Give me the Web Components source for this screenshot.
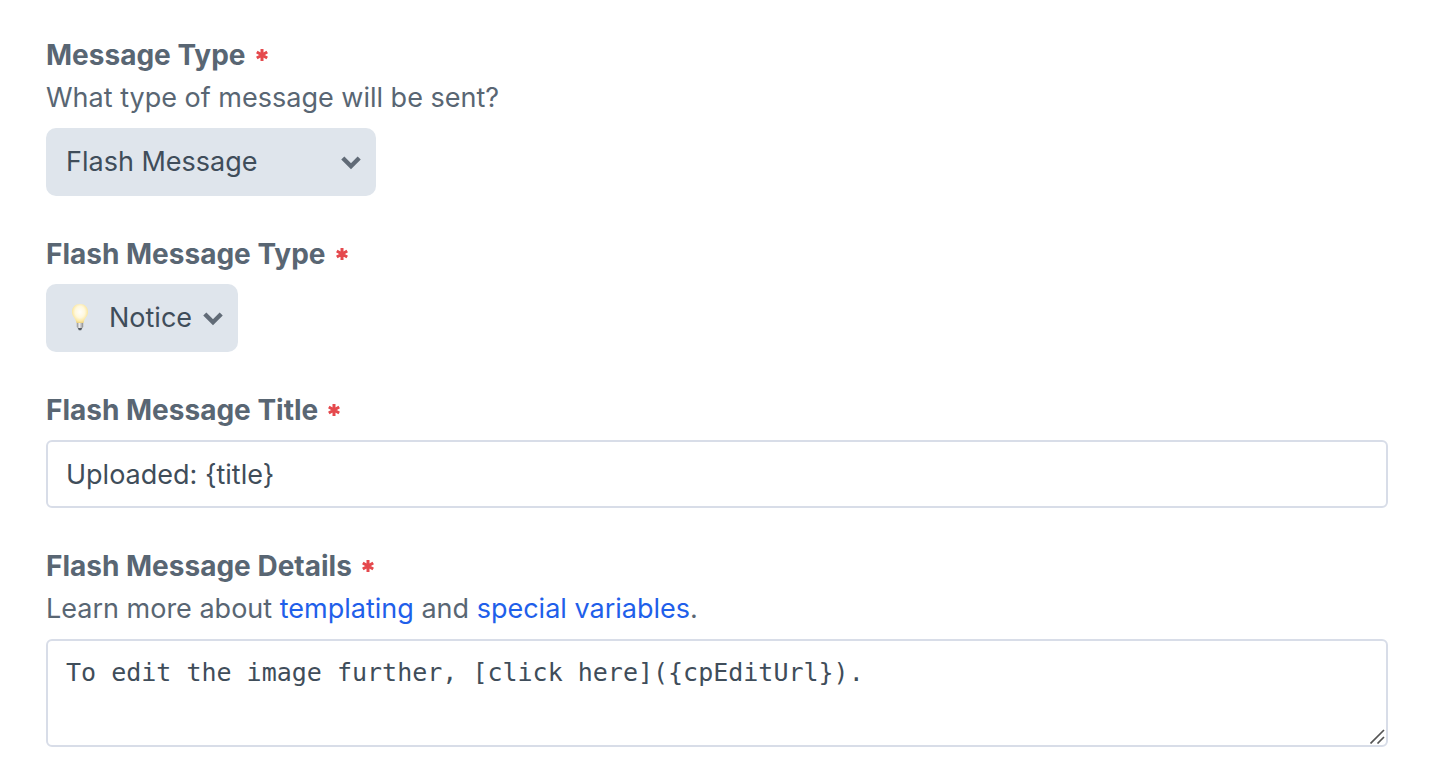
<!DOCTYPE html>
<html lang="en">
<head>
<meta charset="utf-8">
<title>Message settings</title>
<style>
  body {
    margin: 0;
    background: #fff;
    color: #596673;
    font-family: Inter, Roboto, sans-serif;
    font-size: 27px;
    line-height: 40px;
  }
</style>
</head>
<body>
<message-form>
  <select-field label="Message Type" options="Flash Message|Email" wide>
    <span slot="hint">What type of message will be sent?</span>
  </select-field>
  <select-field label="Flash Message Type" options="Notice|Error" icon></select-field>
  <text-field label="Flash Message Title" value="Uploaded: {title}"></text-field>
  <code-field label="Flash Message Details" value="To edit the image further, [click here]({cpEditUrl}).">
    <span slot="hint">Learn more about <text-link to="#templating">templating</text-link> and <text-link to="#variables">special variables</text-link>.</span>
  </code-field>
</message-form>

<script>
  class MessageForm extends HTMLElement {
    constructor() {
      super();
      this.attachShadow({ mode: "open" }).innerHTML = `
        <style>
          :host { display: block; }
          form { display: flex; flex-direction: column; gap: 38px; padding: 35px 48px 37px 46px; }
        </style>
        <form><slot></slot></form>`;
    }
  }

  class TextLink extends HTMLElement {
    connectedCallback() {
      if (this.shadowRoot) return;
      this.attachShadow({ mode: "open" }).innerHTML = `
        <style>
          :host { display: inline; }
          a { color: #1f5fea; text-decoration: none; }
          a:hover { text-decoration: underline; }
        </style>
        <a><slot></slot></a>`;
      this.shadowRoot.querySelector("a").href = this.getAttribute("to");
    }
  }

  class RequiredMark extends HTMLElement {
    constructor() {
      super();
      this.attachShadow({ mode: "open" }).innerHTML = `
        <style>
          :host { display: inline-flex; }
          svg { display: block; }
        </style>
        <svg width="12" height="12" viewBox="0 0 12 12" aria-label="required" stroke="#e5494d" stroke-width="3" stroke-linecap="butt">
          <path d="M6 0v12M.8 3l10.400 6M11.200 3L.8 9"/>
        </svg>`;
    }
  }

  class BaseField extends HTMLElement {
    connectedCallback() {
      if (this.shadowRoot) return;
      this.attachShadow({ mode: "open" }).innerHTML = `
        <style>
          :host { display: block; }
          .field { display: flex; flex-direction: column; gap: 10px; }
          .heading { display: flex; flex-direction: column; gap: 3px; }
          .title { display: flex; align-items: center; gap: 10px; }
          label { font-size: 28px; font-weight: 700; }
          ::slotted([slot="hint"]) { display: block; }
          input, select, textarea {
            box-sizing: border-box;
            margin: 0;
            color: #3f4d5a;
            font: inherit;
            outline-color: #1f5fea;
          }
          input, textarea {
            display: block;
            width: 100%;
            border: 2px solid #d8dde8;
            border-radius: 6px;
            background: #fff;
          }
          ${this.styles || ""}
        </style>
        <div class="field">
          <div class="heading">
            <div class="title"><label for="control"></label><required-mark></required-mark></div>
            <slot name="hint"></slot>
          </div>
          ${this.control()}
        </div>`;
      this.shadowRoot.querySelector("label").textContent = this.getAttribute("label");
      this.fill(this.shadowRoot.getElementById("control"));
    }
    fill(control) { control.value = this.getAttribute("value"); }
  }

  class SelectField extends BaseField {
    get styles() {
      return `
        .box { position: relative; align-self: flex-start; display: flex; }
        select {
          appearance: none;
          height: 68px;
          padding: 0 44px 0 20px;
          border: 0;
          border-radius: 10px;
          background: #dfe5ec;
          cursor: pointer;
        }
        :host([wide]) select { width: 330px; }
        :host([icon]) select { width: 192px; padding-left: 63px; }
        .chevron, .bulb { position: absolute; pointer-events: none; }
        .chevron { right: 15px; top: 27px; }
        .bulb { left: 24px; top: 19px; display: none; }
        :host([icon]) .bulb { display: block; }`;
    }
    control() {
      return `
        <div class="box">
          <select id="control"></select>
          <svg class="bulb" width="20" height="28" viewBox="0 0 20 28" aria-hidden="true">
            <defs>
              <radialGradient id="glow" cx=".5" cy=".42" r=".6">
                <stop offset="0" stop-color="#fffefa"/>
                <stop offset=".5" stop-color="#fff8dc"/>
                <stop offset=".82" stop-color="#fbe7a0"/>
                <stop offset="1" stop-color="#e9cd7c"/>
              </radialGradient>
              <linearGradient id="metal">
                <stop offset="0" stop-color="#8a8a8a"/>
                <stop offset=".4" stop-color="#eee"/>
                <stop offset="1" stop-color="#8a8a8a"/>
              </linearGradient>
            </defs>
            <path d="M10 1C5 1 2 4.500 2 9c0 4.500 3.800 6 4.500 11h7c.7-5 4.500-6.500 4.500-11 0-4.500-3-8-8-8z" fill="url(#glow)"/>
            <path d="M6.800 20h6.400v4l-1.200 1.500H8L6.800 24z" fill="url(#metal)"/>
            <path d="M7.800 25h4.400l-1 2.300H8.800z" fill="#555b62"/>
          </svg>
          <svg class="chevron" width="20" height="16" viewBox="0 0 20 16" fill="none" stroke="#616b77" stroke-width="4.400" aria-hidden="true">
            <path d="M1.800 3L10 11.200L18.200 3"/>
          </svg>
        </div>`;
    }
    fill(control) {
      for (const name of this.getAttribute("options").split("|")) control.add(new Option(name));
    }
  }

  class TextField extends BaseField {
    get styles() { return `input { height: 68px; padding: 0 18px; }`; }
    control() { return `<input id="control" type="text" required>`; }
  }

  class CodeField extends BaseField {
    get styles() {
      return `
        .box { position: relative; }
        textarea {
          height: 108px;
          padding: 14px 18px;
          font-family: "DejaVu Sans Mono", monospace;
          font-size: 25px;
          line-height: 36px;
          resize: vertical;
        }
        textarea::-webkit-resizer { background: transparent; }
        .grip { position: absolute; right: 3px; bottom: 3px; pointer-events: none; }`;
    }
    control() {
      return `
        <div class="box">
          <textarea id="control" required spellcheck="false"></textarea>
          <svg class="grip" width="15" height="15" viewBox="0 0 15 15" stroke="#555" stroke-width="1.700" aria-hidden="true">
            <path d="M.5 14.500L14 1M7.500 14.500L14 8"/>
          </svg>
        </div>`;
    }
  }

  customElements.define("required-mark", RequiredMark);
  customElements.define("text-link", TextLink);
  customElements.define("select-field", SelectField);
  customElements.define("text-field", TextField);
  customElements.define("code-field", CodeField);
  customElements.define("message-form", MessageForm);
</script>
</body>
</html>
